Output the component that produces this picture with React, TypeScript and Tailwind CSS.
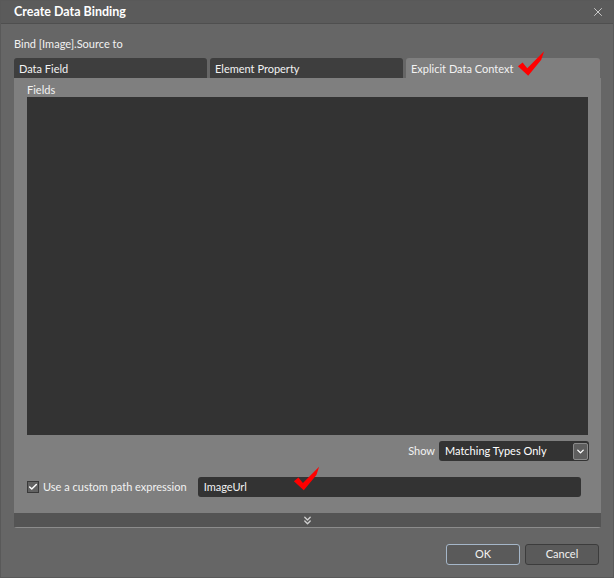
import { ChevronDown, ChevronsDown, X, Check } from 'lucide-react'

function RedTick({ className }: { className: string }) {
  return (
    <svg viewBox="0 0 30 26" className={className}>
      <polygon points="1,16 6,12 11,18 29,0 26,9 12,26" fill="#ff0000" />
    </svg>
  )
}

export default function App() {
  return (
    <div
      className="w-[614px] h-[578px] flex flex-col bg-[#666666] border border-[#595959] text-[11px] text-[#f2f2f2] relative overflow-hidden"
      style={{ fontFamily: 'Lato, "Open Sans", sans-serif' }}
    >
      {/* Title bar */}
      <div className="h-[23px] shrink-0 flex items-center justify-between pl-[13px] pr-[8px] bg-[#5b5b5b] border-b border-[#4f4f4f]">
        <span className="font-bold text-[12.5px] text-white">Create Data Binding</span>
        <X size={14} strokeWidth={1.5} className="text-[#d8d8d8]" />
      </div>

      {/* Body */}
      <div className="flex flex-col pl-[13px] pr-[13px]">
        <div className="h-[16px] mt-[12px] leading-[16px]">Bind [Image].Source to</div>

        {/* Tabs */}
        <div className="relative flex gap-[3px] mt-[6px] h-[20px]">
          <div className="w-[193px] h-[20px] rounded-t-[3px] bg-[#3e3e3e] pl-[5px] leading-[21px]">Data Field</div>
          <div className="w-[193px] h-[20px] rounded-t-[3px] bg-[#3e3e3e] pl-[5px] leading-[21px]">Element Property</div>
          <div className="w-[194px] h-[20px] rounded-t-[3px] bg-[#7f7f7f] pl-[5px] leading-[21px]">Explicit Data Context</div>
          <RedTick className="absolute left-[503px] top-[-7px] w-[28px] h-[25px]" />
        </div>

        {/* Panel */}
        <div className="w-[587px] h-[450px] bg-[#7f7f7f] rounded-b-[3px] border-b border-[#8c8c8c] flex flex-col">
          <div className="h-[19px] pl-[13px] pt-[4px] leading-[16px]">Fields</div>
          <div className="mx-[13px] h-[338px] bg-[#333333]" />

          <div className="flex items-center justify-end gap-[4px] mt-[6px] pr-[12px] h-[20px]">
            <span>Show</span>
            <div className="w-[150px] h-[20px] rounded-[3px] bg-[#333333] flex items-center justify-between pl-[6px] pr-[1px]">
              <span className="text-white">Matching Types Only</span>
              <div className="w-[15px] h-[17px] rounded-[2px] bg-[#5e5e5e] border border-[#8a8a8a] flex items-center justify-center">
                <ChevronDown size={11} strokeWidth={3} className="text-white" />
              </div>
            </div>
          </div>

          <div className="relative flex items-center mt-[16px] h-[20px] pl-[13px]">
            <div className="w-[12px] h-[12px] border border-[#3a3a3a] bg-[#626262] flex items-center justify-center">
              <Check size={10} strokeWidth={3.5} className="text-white" />
            </div>
            <span className="ml-[4px]">Use a custom path expression</span>
            <div className="ml-[11px] w-[383px] h-[20px] rounded-[3px] bg-[#333333] pl-[6px] leading-[20px]">ImageUrl</div>
            <RedTick className="absolute left-[279px] top-[-11px] w-[27px] h-[25px]" />
          </div>

          <div className="mt-[16px] h-[14px] bg-[#545454] flex items-center justify-center">
            <ChevronsDown size={13} strokeWidth={2.5} className="text-[#d0d0d0]" />
          </div>
        </div>

        {/* Buttons */}
        <div className="flex justify-end gap-[5px] mt-[16px] pr-[1px]">
          <button className="w-[74px] h-[21px] rounded-[3px] bg-[#5a5a5a] border border-[#a5b6c8] text-[11px]">OK</button>
          <button className="w-[74px] h-[21px] rounded-[3px] bg-[#5a5a5a] border border-[#3c3c3c] text-[11px]">Cancel</button>
        </div>
      </div>
    </div>
  )
}
